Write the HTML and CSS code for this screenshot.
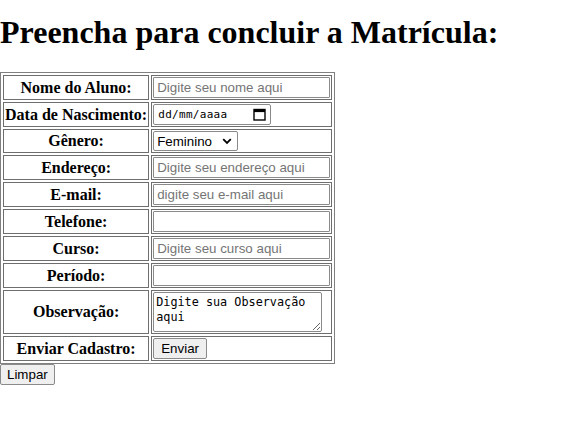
FILE: index.html
```html
<!DOCTYPE html>
<html lang="pt-BR">
<head>
<meta charset="utf-8">
<title>Matrícula</title>
<link rel="stylesheet" href="styles.css">
</head>
<body>
<h1 class="title">Preencha para concluir a Matrícula:</h1>
<form class="form">
  <table class="grid">
    <tr><th>Nome do Aluno:</th><td><input class="field" type="text" placeholder="Digite seu nome aqui"></td></tr>
    <tr><th>Data de Nascimento:</th><td><span class="date"><span class="date-text">dd/mm/aaaa</span><svg class="cal" width="13" height="13" viewBox="0 0 13 13"><rect x="1" y="1.5" width="11" height="10.5" fill="none" stroke="#000" stroke-width="1.4"/><rect x="1" y="1.5" width="11" height="2.6" fill="#000"/></svg></span></td></tr>
    <tr><th>Gênero:</th><td><span class="select">Feminino<svg class="chev" width="10" height="7" viewBox="0 0 10 7"><path d="M1.2 1.2 L5 5 L8.8 1.2" fill="none" stroke="#000" stroke-width="1.8"/></svg></span></td></tr>
    <tr><th>Endereço:</th><td><input class="field" type="text" placeholder="Digite seu endereço aqui"></td></tr>
    <tr><th>E-mail:</th><td><input class="field" type="text" placeholder="digite seu e-mail aqui"></td></tr>
    <tr><th>Telefone:</th><td><input class="field" type="text"></td></tr>
    <tr><th>Curso:</th><td><input class="field" type="text" placeholder="Digite seu curso aqui"></td></tr>
    <tr><th>Período:</th><td><input class="field" type="text"></td></tr>
    <tr><th>Observação:</th><td><textarea class="area">Digite sua Observação aqui</textarea></td></tr>
    <tr><th>Enviar Cadastro:</th><td><button class="btn" type="button">Enviar</button></td></tr>
  </table>
  <button class="btn reset" type="reset">Limpar</button>
</form>
</body>
</html>
```
FILE: styles.css
```css
html, body {
  margin: 0;
  padding: 0;
  background: #fff;
}
body {
  font-family: "Liberation Serif", "Times New Roman", serif;
  font-size: 16px;
  color: #000;
}
.title {
  font-size: 32px;
  font-weight: bold;
  margin: 14px 0 21px 0;
  line-height: 37px;
}
.form {
  margin: 0;
}
.grid {
  border: 1px solid #808080;
  border-spacing: 2px;
  margin-left: 0;
}
.grid th, .grid td {
  border: 1px solid #6e6e6e;
  padding: 1px;
}
.grid th {
  font-weight: bold;
  text-align: center;
  vertical-align: middle;
}
.field {
  box-sizing: border-box;
  width: 177px;
  height: 21px;
  margin: 0;
  border: 1px solid #8a8a8a;
  border-radius: 1px;
  padding: 1px 3px;
  font-family: "Liberation Sans", Arial, sans-serif;
  font-size: 13.33px;
  display: block;
}
.field::placeholder {
  color: #757575;
}
.date {
  box-sizing: border-box;
  width: 118px;
  height: 21px;
  border: 1px solid #8a8a8a;
  border-radius: 2px;
  display: flex;
  align-items: center;
  padding: 0 4px 0 4px;
  font-family: "DejaVu Sans Mono", "Liberation Mono", monospace;
  font-size: 11px;
}
.date-text {
  flex: 1;
  letter-spacing: 0.3px;
}
.cal {
  display: block;
}
.select {
  box-sizing: border-box;
  width: 85px;
  height: 20px;
  border: 1px solid #8a8a8a;
  border-radius: 2px;
  display: flex;
  align-items: center;
  justify-content: space-between;
  padding: 0 5px 0 3px;
  font-family: "Liberation Sans", Arial, sans-serif;
  font-size: 13.33px;
  margin: 0;
}
.chev {
  display: block;
}
.area {
  box-sizing: border-box;
  width: 169px;
  height: 40px;
  margin: 0;
  display: block;
  border: 1px solid #8a8a8a;
  border-radius: 2px;
  padding: 2px;
  font-family: "DejaVu Sans Mono", "Liberation Mono", monospace;
  font-size: 11.8px;
  line-height: 15px;
  resize: both;
  overflow: hidden;
}
.btn {
  box-sizing: border-box;
  height: 21px;
  padding: 0 7px;
  margin: 0;
  border: 1px solid #8a8a8a;
  border-radius: 2px;
  background: #efefef;
  font-family: "Liberation Sans", Arial, sans-serif;
  font-size: 13.33px;
  color: #000;
}
.reset {
  padding: 0 6px;
}
```
